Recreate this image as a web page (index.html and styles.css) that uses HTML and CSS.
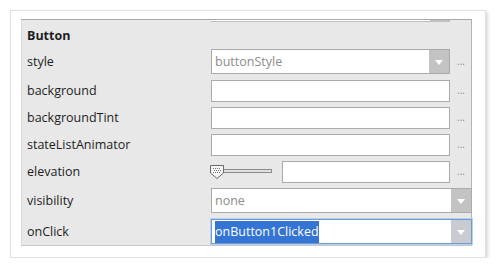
FILE: index.html
```html
<!DOCTYPE html>
<html lang="en">
<head>
  <meta charset="UTF-8">
  <title>Button properties</title>
  <link rel="stylesheet" href="styles.css">
</head>
<body>
  <div class="card">
    <div class="panel">
      <div class="prev-row"><div class="prev-box"><span class="prev-arrow"></span></div></div>
      <div class="group-title">Button</div>

      <div class="row gap">
        <label>style</label>
        <div class="combo"><span class="value hint">buttonStyle</span><span class="arrow"></span></div>
        <span class="more">...</span>
      </div>
      <div class="row">
        <label>background</label>
        <div class="field"></div>
        <span class="more">...</span>
      </div>
      <div class="row">
        <label>backgroundTint</label>
        <div class="field"></div>
        <span class="more">...</span>
      </div>
      <div class="row">
        <label>stateListAnimator</label>
        <div class="field"></div>
        <span class="more">...</span>
      </div>
      <div class="row gap">
        <label>elevation</label>
        <div class="slider">
          <div class="track"></div>
          <svg class="thumb" width="16" height="16" viewBox="0 0 16 16">
            <path d="M1.5 1.5 H14.5 V9 L8 14.5 L1.5 9 Z" fill="#f4f4f4" stroke="#6a6a6a"/>
            <g fill="#777">
              <rect x="4" y="4" width="1" height="1"/><rect x="6" y="4" width="1" height="1"/><rect x="8" y="4" width="1" height="1"/><rect x="10" y="4" width="1" height="1"/>
              <rect x="5" y="6" width="1" height="1"/><rect x="7" y="6" width="1" height="1"/><rect x="9" y="6" width="1" height="1"/><rect x="11" y="6" width="1" height="1"/>
              <rect x="4" y="8" width="1" height="1"/><rect x="6" y="8" width="1" height="1"/><rect x="8" y="8" width="1" height="1"/><rect x="10" y="8" width="1" height="1"/>
            </g>
          </svg>
        </div>
        <div class="field short"></div>
        <span class="more">...</span>
      </div>
      <div class="row wide-gap">
        <label>visibility</label>
        <div class="combo wide"><span class="value hint">none</span><span class="arrow"></span></div>
      </div>
      <div class="row">
        <label>onClick</label>
        <div class="combo wide focused"><span class="value"><span class="selected">onButton1Clicked</span></span><span class="arrow"></span></div>
      </div>
    </div>
  </div>
</body>
</html>
```

FILE: styles.css
```css
body { margin: 0; background: #fff; font-family: "Open Sans", "Noto Sans", sans-serif; font-size: 12.5px; color: #1e1e1e; }
.card { margin: 10px 0 0 10px; width: 474px; height: 246px; border: 1px solid #e0e0e0; box-shadow: 2px 2px 3px rgba(0,0,0,0.15); background: #fff; }
.panel { margin: 8px 0 0 10px; width: 451px; height: 227px; background: #e8e8e8; border-top: 1px solid #a8a8a8; border-right: 1px solid #b4b4b4; border-bottom: 1px solid #c8c8c8; border-left: 1px solid #dadada; box-sizing: border-box; padding-left: 5px; }

.prev-row { height: 2px; padding-left: 184px; }
.prev-box { width: 239px; height: 1px; border-bottom: 1px solid #bcbcbc; background: #fff; position: relative; }
.prev-arrow { position: absolute; right: 0; top: 0; width: 20px; height: 2px; background: #c0c0c0; }

.group-title { font-weight: bold; height: 24px; line-height: 24px; margin-top: 2px; }

.row { display: flex; align-items: center; height: 27px; }
.row.gap { margin-bottom: 2px; }
.row.wide-gap { margin-bottom: 4px; }
.row label { width: 184px; flex: none; }

.field, .combo { height: 22px; box-sizing: border-box; border: 1px solid #ababab; background: #fff; flex: none; }
.field { width: 239px; }
.field.short { width: 168px; }
.combo { width: 239px; height: 25px; display: flex; align-items: stretch; }
.combo.wide { width: 261px; }
.combo .value { flex: 1; padding-left: 3px; display: flex; align-items: center; }
.hint { color: #8c8c8c; }
.arrow { width: 20px; background: #c3c3c3; position: relative; }
.arrow::after { content: ""; position: absolute; left: 6px; top: 50%; margin-top: -2px; border-left: 4px solid transparent; border-right: 4px solid transparent; border-top: 5px solid #fff; }
.combo.focused { border-color: #6f9bd1; box-shadow: 0 0 0 1px #b8d0ee; }
.combo.focused .arrow { background: #c8ccd2; }
.selected { background: #3474d4; color: #fff; padding: 2px 0 3px; }

.more { color: #8a8a8a; font-size: 10px; margin-left: 7px; padding-bottom: 2px; }

.slider { width: 73px; height: 16px; position: relative; margin-left: -2px; flex: none; }
.track { position: absolute; left: 12px; top: 5px; width: 51px; height: 4px; border: 1px solid #8c8c8c; background: #e0e0e0; box-sizing: border-box; }
.thumb { position: absolute; left: 0; top: 0; }
```
